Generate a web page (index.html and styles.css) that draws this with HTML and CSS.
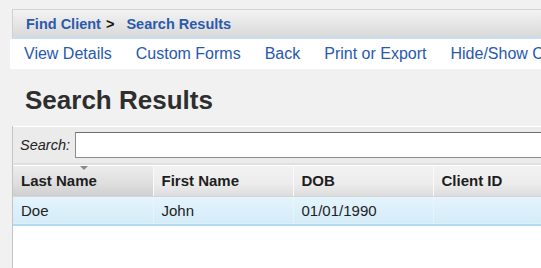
FILE: index.html
```html
<!DOCTYPE html>
<html>
<head>
<meta charset="utf-8">
<title>Search Results</title>
<link rel="stylesheet" href="styles.css">
</head>
<body>
  <div class="page">
    <div class="crumbs">
      <a href="#">Find Client</a><span class="sep">&gt;</span><a href="#">Search Results</a>
    </div>
    <div class="actions">
      <a href="#">View Details</a>
      <a href="#">Custom Forms</a>
      <a href="#">Back</a>
      <a href="#">Print or Export</a>
      <a href="#">Hide/Show Columns</a>
    </div>
    <h1 class="title">Search Results</h1>
    <div class="results">
      <div class="search-bar">
        <label for="q">Search:</label>
        <input id="q" type="text">
      </div>
      <table class="grid">
        <tr>
          <th class="sorted">Last Name<span class="arrow"></span></th>
          <th>First Name</th>
          <th>DOB</th>
          <th>Client ID</th>
        </tr>
        <tr class="selected">
          <td>Doe</td>
          <td>John</td>
          <td>01/01/1990</td>
          <td></td>
        </tr>
      </table>
    </div>
  </div>
</body>
</html>
```

FILE: styles.css
```css
body { margin: 0; background: #f1f1f1; font-family: "Liberation Sans", Arial, Helvetica, sans-serif; overflow: hidden; }
.page { padding: 9px 0 0 12px; width: 700px; }

.crumbs { height: 27px; border-top: 1px solid #d4d4d4; border-left: 1px solid #d0d0d0; background: linear-gradient(#f3f3f3, #e6e6e6 50%, #d9d9d9); padding-left: 13px; display: flex; align-items: center; font-size: 14.5px; font-weight: bold; border-bottom: 2px solid #c8def2; }
.crumbs a { color: #2b5aab; text-decoration: none; }
.crumbs .sep { color: #111; margin: 0 12px 0 5px; }

.actions { height: 30px; background: #fff; display: flex; align-items: center; gap: 24px; padding-left: 14px; margin-left: -2px; white-space: nowrap; }
.actions a { color: #2758b0; text-decoration: none; font-size: 16px; }

.title { margin: 0; height: 57px; box-sizing: border-box; padding: 16px 0 0 13px; font-size: 26px; font-weight: bold; color: #2e2e2e; }

.results { border-left: 1px solid #c4c4c4; background: #fff; height: 200px; }
.search-bar { height: 39px; border-top: 1px solid #fff; box-sizing: border-box; background: #ebebeb; display: flex; align-items: center; padding-left: 7px; border-bottom: 2px solid #e0e0e0; }
.search-bar label { font-style: italic; font-size: 14.5px; color: #222; margin-right: 5px; }
.search-bar input { height: 26px; box-sizing: border-box; width: 520px; border: 1px solid #8c8c8c; border-top-color: #6e6e6e; background: #fff; }

.grid { border-collapse: collapse; table-layout: fixed; width: 560px; font-size: 15px; margin-top: 1px; }
.grid th, .grid td { width: 140px; box-sizing: border-box; text-align: left; padding: 0 0 0 8px; }
.grid th { height: 30px; font-weight: bold; color: #1e1e1e; background: linear-gradient(#f2f2f2, #ececec 60%, #dcdcdc); border-right: 1px solid #fafafa; border-bottom: 1px solid #d6d6d6; position: relative; }
.grid th.sorted { background: linear-gradient(#ececec, #dedede 60%, #cfcfcf); }
.grid th .arrow { position: absolute; left: 67px; top: 0; border-left: 4px solid transparent; border-right: 4px solid transparent; border-top: 4px solid #8a8a8a; }
.grid td { height: 29px; color: #222; background: linear-gradient(#e4f4fc, #d4ecf9); border-right: 1px dotted #f4f8fa; border-bottom: 2px solid #b3dcf2; }
```
